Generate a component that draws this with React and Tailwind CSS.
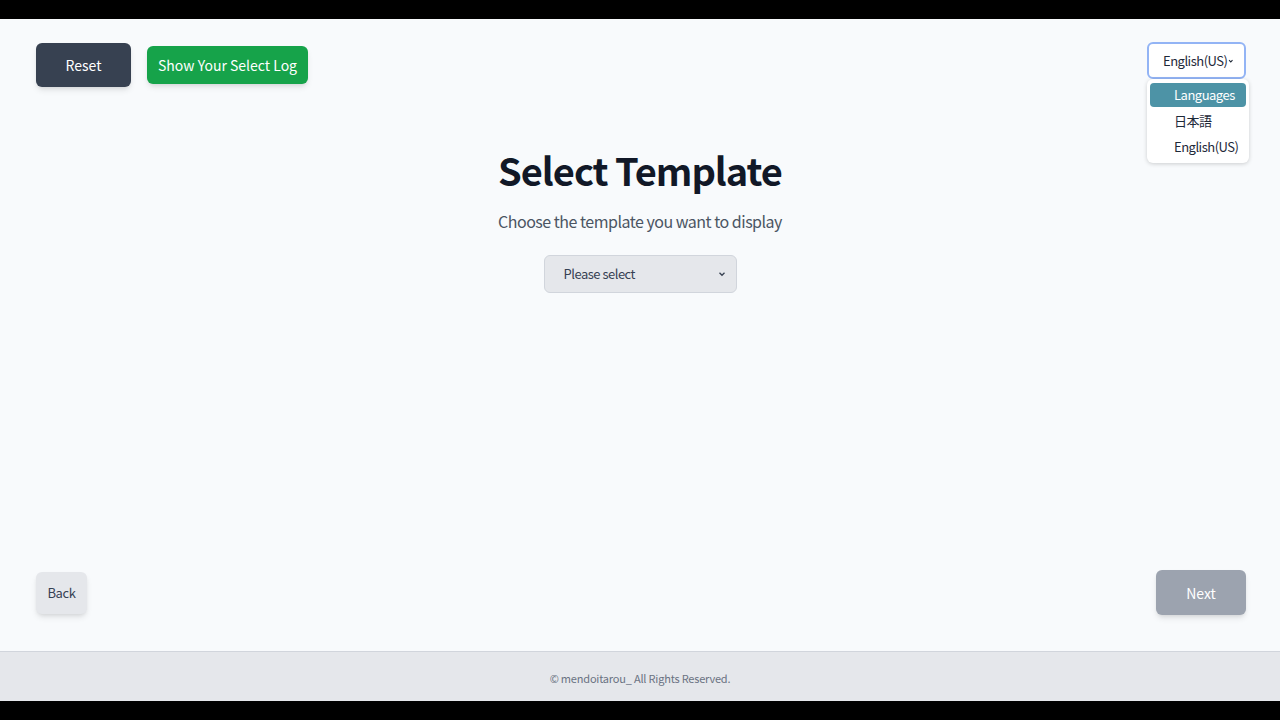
import React from 'react'

const font = { fontFamily: '"Noto Sans CJK JP", "Noto Sans", sans-serif' }

function LanguageSelect() {
  return (
    <div className="relative -mt-[1px]">
      <div className="flex h-[37px] w-[99px] items-center justify-center rounded-md border-2 border-[#93b4f5] bg-white pl-[14px] pr-[10px] text-[13px] tracking-[-0.5px] text-gray-800">
        <span>English(US)</span>
        <svg width="8" height="8" viewBox="0 0 8 8" className="ml-[1px]">
          <path d="M1.5 2.8 L4 5.3 L6.5 2.8" fill="none" stroke="#1f2937" strokeWidth="1.5" />
        </svg>
      </div>
      <div className="absolute left-0 top-[37px] w-[102px] rounded-md bg-white p-[3px] text-[13px] tracking-[-0.5px] text-gray-800 shadow-[0_1px_4px_rgba(0,0,0,0.18)]">
        <div className="flex h-[26px] items-center py-[1px]">
          <div className="flex h-[24px] w-full items-center rounded-sm bg-[#4d93a6] pl-[24px] text-white">Languages</div>
        </div>
        <div className="flex h-[26px] items-center pl-[24px]">日本語</div>
        <div className="flex h-[26px] items-center pl-[24px]">English(US)</div>
      </div>
    </div>
  )
}

export default function App() {
  return (
    <div className="flex min-h-screen flex-col bg-black" style={font}>
      <div className="h-[19px] bg-black"></div>
      <div className="flex h-[682px] flex-col bg-[#f8fafc]">
        <div className="flex flex-1 flex-col">
          <div className="flex items-start justify-between pl-9 pr-[34px] pt-[24px]">
            <div className="flex items-center gap-4">
              <button className="h-[44px] w-[95px] rounded-md bg-[#374151] text-sm text-white shadow-md">Reset</button>
              <button className="h-[38px] rounded-md bg-[#16a34a] px-[11px] text-sm text-white shadow-md">Show Your Select Log</button>
            </div>
            <LanguageSelect />
          </div>

          <div className="flex flex-col items-center pt-[55px]">
            <h1 className="text-[38px] font-bold leading-[56px] tracking-[-1px] text-[#111827]">Select Template</h1>
            <p className="mt-[9px] text-base leading-[28px] tracking-[-0.5px] text-[#4b5563]">Choose the template you want to display</p>
            <div className="mt-[20px] flex h-[38px] w-[193px] items-center justify-between rounded-md border border-gray-300 bg-[#e5e7eb] pl-[19px] pr-[10px] text-[13px] tracking-[-0.5px] text-gray-700">
              <span>Please select</span>
              <svg width="8" height="8" viewBox="0 0 8 8">
                <path d="M1.5 2.8 L4 5.3 L6.5 2.8" fill="none" stroke="#374151" strokeWidth="1.3" />
              </svg>
            </div>
          </div>

          <div className="mt-auto flex items-center justify-between pb-[36px] pl-9 pr-[34px]">
            <button className="h-[42px] w-[51px] rounded-md bg-[#e5e7eb] text-[13px] tracking-[-0.4px] text-gray-700 shadow-md">Back</button>
            <button className="h-[45px] w-[90px] rounded-md bg-[#9ca3af] text-sm text-white shadow-md">Next</button>
          </div>
        </div>
        <footer className="flex h-[50px] items-center justify-center border-t border-gray-300 bg-[#e5e7eb] pt-[3px] text-[11px] tracking-[-0.2px] text-gray-500">
          © mendoitarou_ All Rights Reserved.
        </footer>
      </div>
      <div className="h-[19px] bg-black"></div>
    </div>
  )
}
